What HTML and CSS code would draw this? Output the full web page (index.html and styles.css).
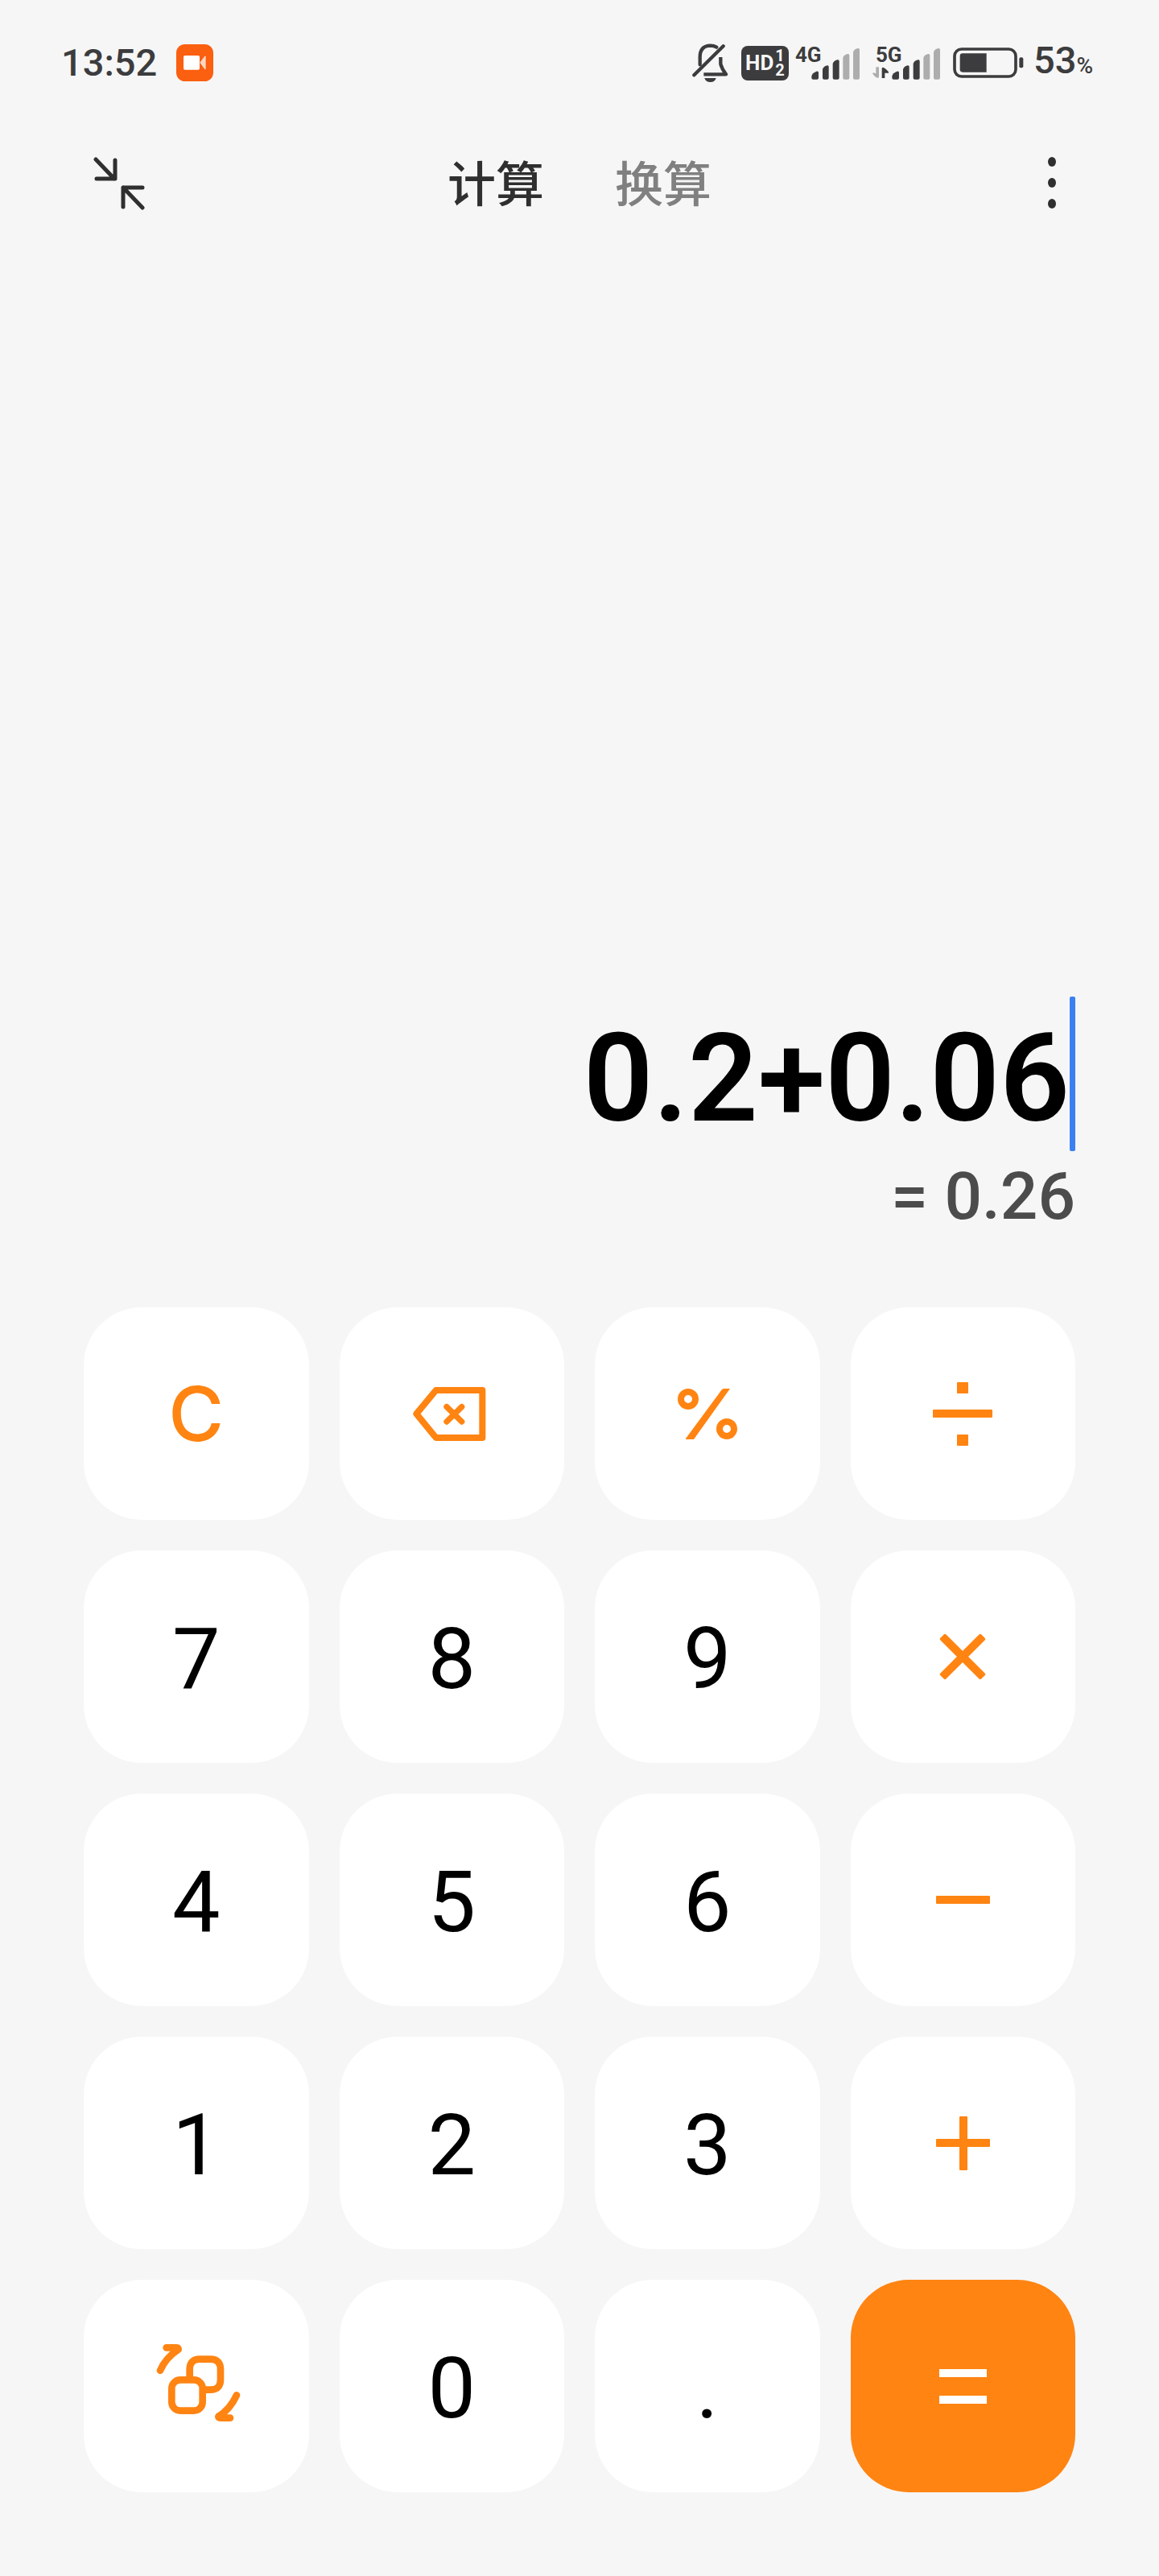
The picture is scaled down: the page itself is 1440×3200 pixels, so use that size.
FILE: index.html
```html
<!DOCTYPE html>
<html lang="zh-CN">
<head>
    <meta charset="UTF-8">
    <meta name="viewport" content="width=device-width, initial-scale=1.0">
    <title>计算器</title>
    <link rel="stylesheet" href="styles.css">
</head>
<body>
<div class="app">

    <!-- Status bar -->
    <div class="status-bar">
        <div class="status-left">
            <span class="status-text">13:52</span>
            <svg class="rec-icon" viewBox="0 0 138 138">
                <rect width="138" height="138" rx="32" fill="#fb5f10"/>
                <rect x="27" y="42" width="60" height="53" rx="5" fill="#fff"/>
                <path d="M88 68 L106 44 Q110 42 110 47 V90 Q110 95 106 93 Z" fill="#fff" opacity="0.75"/>
            </svg>
        </div>
        <div class="status-right">
            <svg class="bell-icon" viewBox="57 66 135 150" fill="none" stroke="#3c3c3e" stroke-width="13" stroke-linecap="round" stroke-linejoin="round">
                <path d="M86 148 V120 Q86 78 125 77 Q138 77 148 83"/>
                <path d="M64 187 L173 79"/>
                <path d="M163 120 V146 Q168 164 183 184 H100" stroke-linecap="butt"/>
                <path d="M103 198 H146 Q142 213 125 213 Q107 213 103 198 Z" fill="#3c3c3e" stroke="none"/>
            </svg>
            <div class="hd-badge">
                <span>HD</span>
                <span class="hd-sims"><span>1</span><span>2</span></span>
            </div>
            <div class="signal">
                <span class="signal-label">4G</span>
                <svg viewBox="435 72 240 132">
                    <g fill="#3c3c3e">
                        <path d="M496 194 V188 Q498 176 514 170 Q522 168 522 175 V194 Q522 200 516 200 H502 Q496 200 496 194 Z"/>
                        <path d="M537 194 V162 Q540 152 554 148 Q560 147 560 153 V194 Q560 200 554 200 H543 Q537 200 537 194 Z"/>
                        <path d="M575 194 V141 Q578 131 592 127 Q599 125 599 132 V194 Q599 200 593 200 H581 Q575 200 575 194 Z"/>
                    </g>
                    <g fill="#adadad">
                        <path d="M613 194 V119 Q616 109 630 105 Q637 104 637 110 V194 Q637 200 631 200 H619 Q613 200 613 194 Z"/>
                        <path d="M651 194 V98 Q654 88 668 84 Q675 83 675 89 V194 Q675 200 669 200 H657 Q651 200 651 194 Z"/>
                    </g>
                </svg>
            </div>
            <div class="signal signal-data">
                <span class="signal-label">5G</span>
                <svg viewBox="435 72 240 132">
                    <path d="M436 154 H447 V190 Q446 196 441 194 Q430 190 423 178 L426 175 L436 178 Z" fill="#adadad"/>
                    <path d="M458 195 V159 Q460 153 465 156 Q476 162 483 172 V176 H469 V195 Z" fill="#3c3c3e"/>
                    <g fill="#3c3c3e">
                        <path d="M496 194 V188 Q498 176 514 170 Q522 168 522 175 V194 Q522 200 516 200 H502 Q496 200 496 194 Z"/>
                        <path d="M537 194 V162 Q540 152 554 148 Q560 147 560 153 V194 Q560 200 554 200 H543 Q537 200 537 194 Z"/>
                        <path d="M575 194 V141 Q578 131 592 127 Q599 125 599 132 V194 Q599 200 593 200 H581 Q575 200 575 194 Z"/>
                    </g>
                    <g fill="#adadad">
                        <path d="M613 194 V119 Q616 109 630 105 Q637 104 637 110 V194 Q637 200 631 200 H619 Q613 200 613 194 Z"/>
                        <path d="M651 194 V98 Q654 88 668 84 Q675 83 675 89 V194 Q675 200 669 200 H657 Q651 200 651 194 Z"/>
                    </g>
                </svg>
            </div>
            <svg class="battery-icon" viewBox="0 0 264 114">
                <rect x="6" y="6" width="228" height="102" rx="26" fill="none" stroke="#3c3c3e" stroke-width="11"/>
                <path d="M36 22 H125 V92 H36 Q26 92 26 82 V32 Q26 22 36 22 Z" fill="#3c3c3e"/>
                <rect x="247" y="37" width="15" height="39" rx="6" fill="#3c3c3e"/>
            </svg>
            <span class="status-text battery-text">53<span class="status-unit">%</span></span>
        </div>
    </div>

    <!-- Header -->
    <header class="header">
        <button class="icon-button" aria-label="小窗">
            <svg viewBox="0 0 64 66" fill="none" stroke="#2f2f2f" stroke-width="5" stroke-linecap="round" stroke-linejoin="round">
                <path d="M3 3 L26 27 M27 4 V27 H4"/>
                <path d="M61 63 L37 38 M61 38 H37 V62"/>
            </svg>
        </button>
        <nav class="tabs">
            <a class="tab active" href="#">计算</a>
            <a class="tab" href="#">换算</a>
        </nav>
        <button class="icon-button" aria-label="更多">
            <svg viewBox="0 0 64 66" fill="#2f2f2f">
                <ellipse cx="47" cy="6" rx="5" ry="6"/>
                <ellipse cx="47" cy="32" rx="5" ry="6"/>
                <ellipse cx="47" cy="58" rx="5" ry="6"/>
            </svg>
        </button>
    </header>

    <!-- Display -->
    <main class="display">
        <div class="expression">
            <input class="expression-input" type="text" value="0.2+0.06" aria-label="算式" readonly>
            <span class="cursor"></span>
        </div>
        <output class="result">= 0.26</output>
    </main>

    <!-- Keypad -->
    <div class="keypad">
        <button class="key key-clear">C</button>
        <button class="key" aria-label="退格">
            <svg viewBox="3 -12 360 360" fill="none" stroke="#ff8412" stroke-linecap="round" stroke-linejoin="round">
                <path d="M52 169 L125 81 H298 V258 H125 Z" stroke-width="24"/>
                <path d="M165 143 L221 198 M221 143 L165 198" stroke-width="22"/>
            </svg>
        </button>
        <button class="key" aria-label="百分号">
            <svg viewBox="0 0 120 120" fill="#ff8412">
                <circle cx="36" cy="42" r="9" fill="none" stroke="#ff8412" stroke-width="8"/>
                <circle cx="84" cy="79" r="9" fill="none" stroke="#ff8412" stroke-width="8"/>
                <path d="M80 29 H88 L43 92 H33 V91 L78 30 Z"/>
            </svg>
        </button>
        <button class="key" aria-label="除">
            <svg viewBox="0 0 120 120" fill="#ff8412">
                <rect x="53" y="21" width="14" height="14" rx="1"/>
                <rect x="23" y="55" width="74" height="10" rx="1"/>
                <rect x="53" y="86" width="14" height="14" rx="1"/>
            </svg>
        </button>

        <button class="key key-digit">7</button>
        <button class="key key-digit">8</button>
        <button class="key key-digit">9</button>
        <button class="key" aria-label="乘">
            <svg viewBox="0 0 120 120" fill="#ff8412">
                <rect x="24" y="55" width="72" height="10" rx="2" transform="rotate(45 60 60)"/>
                <rect x="24" y="55" width="72" height="10" rx="2" transform="rotate(-45 60 60)"/>
            </svg>
        </button>

        <button class="key key-digit">4</button>
        <button class="key key-digit">5</button>
        <button class="key key-digit">6</button>
        <button class="key" aria-label="减">
            <svg viewBox="0 0 120 120" fill="#ff8412">
                <rect x="27" y="55" width="67" height="10" rx="1"/>
            </svg>
        </button>

        <button class="key key-digit">1</button>
        <button class="key key-digit">2</button>
        <button class="key key-digit">3</button>
        <button class="key" aria-label="加">
            <svg viewBox="0 0 120 120" fill="#ff8412">
                <rect x="27" y="55" width="67" height="10" rx="1"/>
                <rect x="56" y="27" width="10" height="67" rx="1"/>
            </svg>
        </button>

        <button class="key" aria-label="科学计算">
            <svg viewBox="12 42 360 360" fill="none" stroke="#ff8412" stroke-width="26" stroke-linecap="round" stroke-linejoin="round">
                <rect x="100" y="199" width="115" height="115" rx="32"/>
                <path d="M167 192 V160 Q167 122 205 122 H244 Q282 122 282 160 V198 Q282 236 244 236 H225" stroke-linecap="butt"/>
                <path d="M57 164 Q78 116 125 86 M80 79 H118 Q126 79 124 86"/>
                <path d="M342 256 Q318 308 274 336 M318 341 H280 Q272 341 275 334"/>
            </svg>
        </button>
        <button class="key key-digit">0</button>
        <button class="key key-digit">.</button>
        <button class="key key-equals" aria-label="等于">
            <svg viewBox="0 0 120 120" fill="#fff">
                <rect x="31" y="39" width="59" height="10"/>
                <rect x="31" y="72" width="59" height="10"/>
            </svg>
        </button>
    </div>

</div>
</body>
</html>
```
FILE: styles.css
```css
/* General Styles */
body {
    margin: 0;
    font-family: "Roboto", "Noto Sans CJK SC", sans-serif;
    background-color: #f6f6f6;
    color: #000;
}

button {
    border: none;
    padding: 0;
    background: none;
    font-family: inherit;
    color: inherit;
    cursor: pointer;
}

.app {
    display: flex;
    flex-direction: column;
    min-height: 100vh;
}

/* Status Bar */
.status-bar {
    display: flex;
    justify-content: space-between;
    align-items: center;
    height: 156px;
    padding: 0 82px 0 76px;
    color: #3c3c3e;
}

.status-left,
.status-right {
    display: flex;
    align-items: center;
}

.status-left {
    gap: 24px;
}

.status-right {
    gap: 16px;
}

.status-text {
    font-size: 47px;
    font-weight: 500;
    line-height: 48px;
}

.battery-text {
    margin-left: -4px;
}

.status-unit {
    font-size: 28px;
}

.rec-icon {
    width: 46px;
    height: 46px;
}

.bell-icon {
    width: 45px;
    height: 50px;
}

.hd-badge {
    display: flex;
    align-items: center;
    justify-content: center;
    gap: 2px;
    width: 59px;
    height: 43px;
    margin-right: -8px;
    border-radius: 8px;
    background-color: #3c3c3e;
    color: #f6f6f6;
    font-size: 26px;
    font-weight: 700;
}

.hd-sims {
    display: flex;
    flex-direction: column;
    font-size: 20px;
    line-height: 18px;
}

.signal {
    position: relative;
    width: 80px;
    height: 44px;
}

.signal svg {
    display: block;
    width: 80px;
    height: 44px;
    overflow: visible;
}

.signal-data {
    margin-left: 4px;
}

.signal-label {
    position: absolute;
    top: 0;
    left: 0;
    font-size: 26px;
    font-weight: 700;
    line-height: 24px;
}

.battery-icon {
    width: 88px;
    height: 38px;
}

/* Header */
.header {
    display: flex;
    justify-content: space-between;
    align-items: center;
    height: 144px;
    padding: 0 116px;
}

.icon-button {
    width: 64px;
    height: 66px;
}

.icon-button svg {
    display: block;
    width: 64px;
    height: 66px;
}

.tabs {
    display: flex;
    gap: 88px;
    padding-top: 6px;
}

.tab {
    font-size: 60px;
    font-weight: 500;
    line-height: 72px;
    color: #808080;
    text-decoration: none;
}

.tab.active {
    color: #2f2f2f;
}

/* Display */
.display {
    flex: 1;
    display: flex;
    flex-direction: column;
    justify-content: flex-end;
    padding: 0 104px 90px;
}

.expression {
    display: flex;
    align-items: center;
    height: 192px;
}

.expression-input {
    flex: 1;
    min-width: 0;
    height: 192px;
    box-sizing: border-box;
    border: none;
    padding: 12px 0 0;
    outline: none;
    background: none;
    font-family: inherit;
    font-size: 152px;
    font-weight: 600;
    text-align: right;
    color: #000;
}

.cursor {
    width: 7px;
    height: 192px;
    border-radius: 2px;
    background-color: #3b80f0;
}

.result {
    display: block;
    margin-top: 8px;
    font-size: 82px;
    font-weight: 500;
    line-height: 96px;
    text-align: right;
    color: #4c4c4c;
}

/* Keypad */
.keypad {
    display: grid;
    grid-template-columns: repeat(4, 1fr);
    grid-auto-rows: 264px;
    gap: 38px;
    padding: 0 104px 104px;
}

.key {
    display: flex;
    align-items: center;
    justify-content: center;
    border-radius: 72px;
    background-color: #fff;
}

.key svg {
    width: 120px;
    height: 120px;
}

.key-digit {
    padding-top: 6px;
    font-size: 106px;
}

.key-clear {
    font-family: "Inter", sans-serif;
    font-size: 94px;
    font-weight: 500;
    color: #ff8412;
}

.key-equals {
    background-color: #ff8412;
}
```
